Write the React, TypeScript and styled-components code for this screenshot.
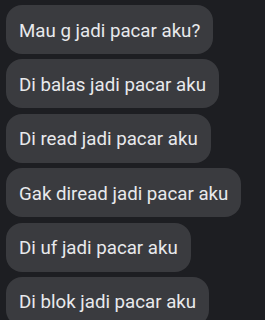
import * as React from 'react'
import styled, { createGlobalStyle } from 'styled-components'

const GlobalStyle = createGlobalStyle`
  html, body {
    margin: 0;
    padding: 0;
    background: #1d1e22;
    overflow: hidden;
  }
`

const Thread = styled.div`
  display: flex;
  flex-direction: column;
  align-items: flex-start;
  gap: 5.4px;
  padding: 5px 6px;
  height: 320px;
  box-sizing: border-box;
  background: #1d1e22;
`

const Bubble = styled.div`
  box-sizing: border-box;
  height: 49px;
  display: flex;
  align-items: center;
  padding: 2px 13px 0;
  border-radius: 16px;
  background: #3a3b3f;
  color: #e8e9ec;
  font-family: Roboto, 'Noto Sans', sans-serif;
  font-size: 18.7px;
  white-space: nowrap;
  flex-shrink: 0;
`

const messages = [
  'Mau g jadi pacar aku?',
  'Di balas jadi pacar aku',
  'Di read jadi pacar aku',
  'Gak diread jadi pacar aku',
  'Di uf jadi pacar aku',
  'Di blok jadi pacar aku'
]

export default function App() {
  return (
    <>
      <GlobalStyle />
      <Thread>
        {messages.map((m) => (
          <Bubble key={m}>{m}</Bubble>
        ))}
      </Thread>
    </>
  )
}
